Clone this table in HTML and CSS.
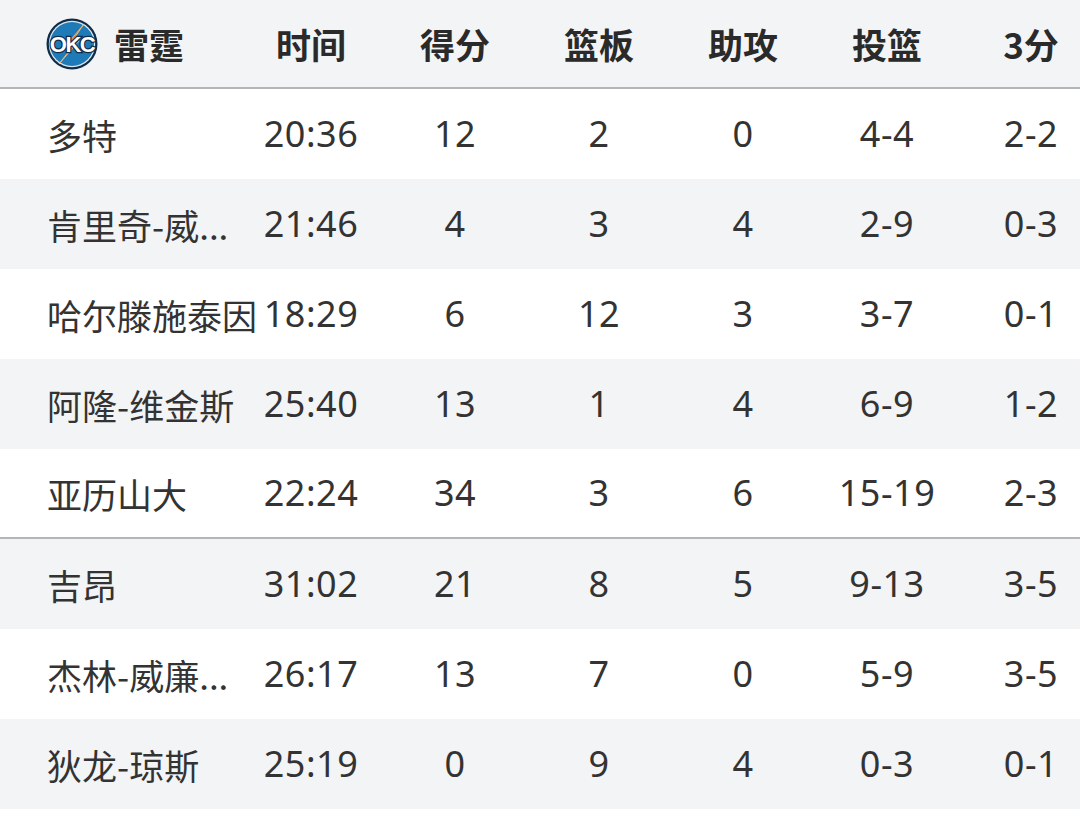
FILE: index.html
```html
<!DOCTYPE html>
<html lang="zh">
<head>
<meta charset="utf-8">
<link rel="stylesheet" href="styles.css">
</head>
<body>
<div class="table">
  <div class="row head">
    <div class="cell name team">
      <svg class="logo" viewBox="0 0 54 54" width="54" height="54">
        <circle cx="27" cy="27" r="25.5" fill="#0f2c48"/>
        <circle cx="27" cy="27" r="23.2" fill="#dfe8ee"/>
        <circle cx="27" cy="27" r="22" fill="#1f7bb7"/>
        <polygon points="39,7 24,25 30,26 14,47 34,24 28,23" fill="#f0732a" stroke="#f6c07a" stroke-width="0.8"/>
        <text x="27" y="34.5" text-anchor="middle" class="okc">OKC</text>
      </svg>
      <span>雷霆</span>
    </div>
    <div class="cell">时间</div>
    <div class="cell">得分</div>
    <div class="cell">篮板</div>
    <div class="cell">助攻</div>
    <div class="cell">投篮</div>
    <div class="cell">3分</div>
  </div>
  <div class="row">
    <div class="cell name">多特</div><div class="cell">20:36</div><div class="cell">12</div><div class="cell">2</div><div class="cell">0</div><div class="cell">4-4</div><div class="cell">2-2</div>
  </div>
  <div class="row alt">
    <div class="cell name">肯里奇-威...</div><div class="cell">21:46</div><div class="cell">4</div><div class="cell">3</div><div class="cell">4</div><div class="cell">2-9</div><div class="cell">0-3</div>
  </div>
  <div class="row">
    <div class="cell name">哈尔滕施泰因</div><div class="cell">18:29</div><div class="cell">6</div><div class="cell">12</div><div class="cell">3</div><div class="cell">3-7</div><div class="cell">0-1</div>
  </div>
  <div class="row alt">
    <div class="cell name">阿隆-维金斯</div><div class="cell">25:40</div><div class="cell">13</div><div class="cell">1</div><div class="cell">4</div><div class="cell">6-9</div><div class="cell">1-2</div>
  </div>
  <div class="row divider">
    <div class="cell name">亚历山大</div><div class="cell">22:24</div><div class="cell">34</div><div class="cell">3</div><div class="cell">6</div><div class="cell">15-19</div><div class="cell">2-3</div>
  </div>
  <div class="row alt">
    <div class="cell name">吉昂</div><div class="cell">31:02</div><div class="cell">21</div><div class="cell">8</div><div class="cell">5</div><div class="cell">9-13</div><div class="cell">3-5</div>
  </div>
  <div class="row">
    <div class="cell name">杰林-威廉...</div><div class="cell">26:17</div><div class="cell">13</div><div class="cell">7</div><div class="cell">0</div><div class="cell">5-9</div><div class="cell">3-5</div>
  </div>
  <div class="row alt">
    <div class="cell name">狄龙-琼斯</div><div class="cell">25:19</div><div class="cell">0</div><div class="cell">9</div><div class="cell">4</div><div class="cell">0-3</div><div class="cell">0-1</div>
  </div>
</div>
</body>
</html>
```
FILE: styles.css
```css
html, body {
  margin: 0;
  padding: 0;
  background: #ffffff;
  overflow: hidden;
}
body {
  width: 1080px;
  height: 819px;
  font-family: "Noto Sans", "Noto Sans CJK SC", sans-serif;
  color: #333333;
}
.table {
  width: 1103px;
}
.row {
  display: grid;
  grid-template-columns: 239px repeat(6, 144px);
  height: 90px;
  align-items: center;
  font-size: 36px;
  letter-spacing: 0.5px;
  box-sizing: border-box;
}
.row.alt {
  background: #f3f4f6;
}
.row.head {
  height: 89px;
  background: #f3f4f6;
  border-bottom: 2px solid #b3b5b8;
  font-weight: 700;
  font-size: 35px;
  letter-spacing: 0;
  color: #2a2a2a;
  font-family: "Noto Sans CJK SC", "Noto Sans", sans-serif;
}
.row.divider {
  border-bottom: 2px solid #b3b5b8;
}
.cell {
  text-align: center;
  white-space: nowrap;
  line-height: 1;
}
.cell.name {
  text-align: left;
  padding-left: 47px;
  font-size: 35px;
  letter-spacing: 0;
  font-family: "Noto Sans CJK SC", "Noto Sans", sans-serif;
}
.team {
  display: flex;
  align-items: center;
  gap: 15px;
  padding-left: 45px !important;
}
.logo {
  display: block;
  flex: none;
}
.okc {
  font-family: "Liberation Sans", sans-serif;
  font-weight: 700;
  font-size: 22px;
  fill: #ffffff;
  stroke: #0f2c48;
  stroke-width: 2.4px;
  paint-order: stroke;
  letter-spacing: -1.5px;
}
```
